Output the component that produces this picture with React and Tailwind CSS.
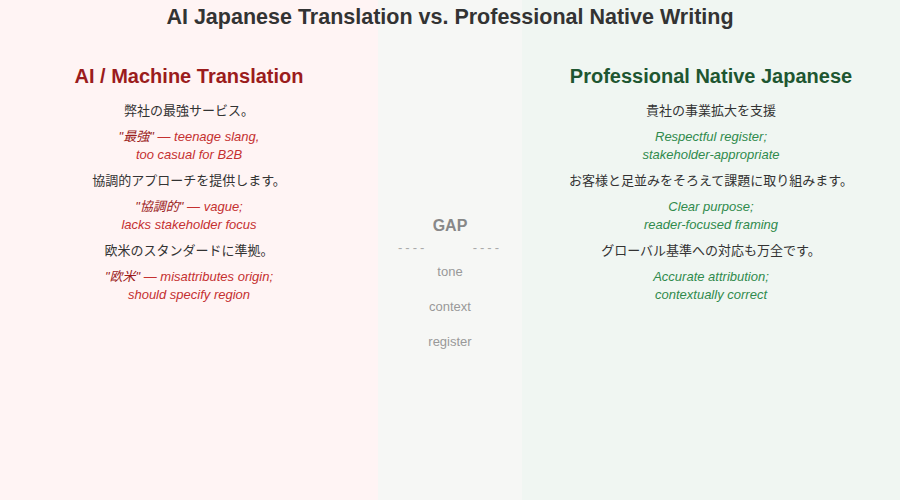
export default function App() {
  const f = { fontFamily: '"Liberation Sans", Arial, "Noto Sans CJK JP", sans-serif' };
  const left = [
    ["弊社の最強サービス。", "\"最強\"", " — teenage slang,", "too casual for B2B"],
    ["協調的アプローチを提供します。", "\"協調的\"", " — vague;", "lacks stakeholder focus"],
    ["欧米のスタンダードに準拠。", "\"欧米\"", " — misattributes origin;", "should specify region"],
  ];
  const right = [
    ["貴社の事業拡大を支援", "Respectful register;", "stakeholder-appropriate"],
    ["お客様と足並みをそろえて課題に取り組みます。", "Clear purpose;", "reader-focused framing"],
    ["グローバル基準への対応も万全です。", "Accurate attribution;", "contextually correct"],
  ];
  return (
    <div className="relative w-[900px] h-[500px] overflow-hidden" style={f}>
      <div className="grid grid-cols-[378px_144px_378px] h-full">
        <div className="bg-[#fff4f4] flex flex-col items-center pt-[64px] text-center">
          <div className="text-[20px] leading-[24px] font-bold text-[#9b1c1c]">AI / Machine Translation</div>
          <div className="mt-[13px] flex flex-col gap-[7px]">
            {left.map((r, i) => (
              <div key={i} className="flex flex-col gap-[7px]">
                <div className="text-[13px] leading-[20px] text-[#333]">{r[0]}</div>
                <div className="text-[13px] leading-[18px] italic text-[#c53030]">
                  <span className="text-[#9b1c1c]">{r[1]}</span>{r[2]}<br />{r[3]}
                </div>
              </div>
            ))}
          </div>
        </div>
        <div className="bg-[#f6f7f5] flex flex-col items-center pt-[216px] text-[#999]">
          <div className="text-[16px] leading-[20px] font-bold text-[#888]">GAP</div>
          <div className="w-[104px] flex justify-between text-[13px] leading-[14px] tracking-[3px] text-[#aaa] mt-[5px]">
            <span>----</span><span>----</span>
          </div>
          <div className="text-[13px] leading-[16px] mt-[9px]">tone</div>
          <div className="text-[13px] leading-[16px] mt-[19px]">context</div>
          <div className="text-[13px] leading-[16px] mt-[19px]">register</div>
        </div>
        <div className="bg-[#f0f6f2] flex flex-col items-center pt-[64px] text-center">
          <div className="text-[20px] leading-[24px] font-bold text-[#1e5631]">Professional Native Japanese</div>
          <div className="mt-[13px] flex flex-col gap-[7px]">
            {right.map((r, i) => (
              <div key={i} className="flex flex-col gap-[7px]">
                <div className="text-[13px] leading-[20px] text-[#333]">{r[0]}</div>
                <div className="text-[13px] leading-[18px] italic text-[#2f8a4c]">
                  {r[1]}<br />{r[2]}
                </div>
              </div>
            ))}
          </div>
        </div>
      </div>
      <div className="absolute top-[4px] left-0 right-0 text-center text-[21.5px] leading-[26px] font-bold text-[#333]">
        AI Japanese Translation vs. Professional Native Writing
      </div>
    </div>
  );
}
